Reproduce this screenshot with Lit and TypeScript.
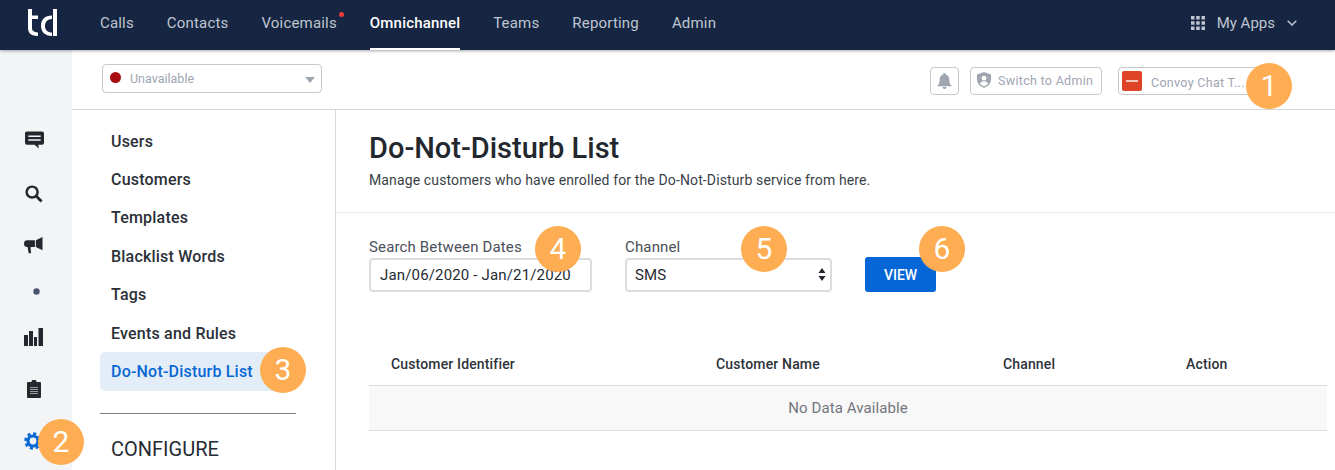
import { LitElement, html, css } from "lit";
import { customElement } from "lit/decorators.js";

@customElement("call-out")
class CallOut extends LitElement {
  static styles = css`
    :host { position: absolute; width: 46px; height: 46px; border-radius: 50%; background: #ffad52; color: #fff;
      display: flex; align-items: center; justify-content: center; font-size: 30px; line-height: 1; z-index: 5; }
  `;
  render() { return html`<slot></slot>`; }
}

@customElement("app-root")
class AppRoot extends LitElement {
  static styles = css`
    :host { display: block; width: 1335px; height: 470px; overflow: hidden; position: relative; background: #fff;
      font-family: Roboto, "Liberation Sans", sans-serif; color: #262b33; }
    .top { height: 50px; background: #162542; display: flex; align-items: stretch; box-shadow: 0 1px 3px rgba(0,0,0,.35); position: relative; z-index: 2; }
    .logo { width: 100px; flex: none; display: flex; }
    .logo svg { margin: 9px 0 0 28px; }
    .links { display: flex; gap: 33px; font-size: 15px; letter-spacing: .18px; }
    .links a { color: #bfc5d0; display: flex; align-items: center; position: relative; height: 50px; padding-bottom: 5px; box-sizing: border-box; }
    .links a.on { color: #fff; font-weight: 500; border-bottom: 2px solid #fff; padding-bottom: 3px; }
    .dot { position: absolute; top: 12px; right: -7px; width: 5px; height: 5px; border-radius: 50%; background: #ee3b3b; }
    .apps { margin-left: auto; margin-right: 38px; display: flex; align-items: center; color: #bfc5d0; font-size: 15px; padding-bottom: 5px; }
    .apps span { margin: 0 12px; }
    .body { display: flex; height: 420px; }
    .rail { width: 72px; flex: none; background: #f2f4f6; position: relative; }
    .rail svg { position: absolute; left: 24px; }
    .main { flex: 1; min-width: 0; }
    .sub { height: 59px; border-bottom: 1px solid #d4d6da; display: flex; align-items: center; padding: 0 77px 0 30px; position: relative; }
    .status { width: 218px; height: 27px; border: 1px solid #c6c8ce; border-radius: 4px; display: flex; align-items: center; color: #a0a5b2; font-size: 12.5px; position: relative; margin-top: -2px; }
    .status i { width: 11px; height: 11px; border-radius: 50%; background: #a80d10; margin: -2px 9px 0 7px; }
    .status b { position: absolute; right: 6px; top: 12px; width: 0; height: 0; border: 5px solid transparent; border-top: 6px solid #a0a5b2; border-bottom: 0; }
    .right { margin-left: auto; display: flex; align-items: center; margin-top: 3px; }
    .box { border: 1px solid #c6c8ce; border-radius: 4px; display: flex; align-items: center; color: #a0a5b2; font-size: 12.5px; box-sizing: border-box; height: 28px; letter-spacing: .3px; }
    .bell { width: 29px; justify-content: center; margin-right: 11px; }
    .admin { width: 132px; margin-right: 16px; padding: 0 0 2px 6px; gap: 7px; }
    .conv { width: 140px; padding-left: 3px; }
    .conv em { width: 20px; height: 20px; border-radius: 2px; background: #dd4526; display: flex; align-items: center; justify-content: center; margin-right: 9px; flex: none; }
    .conv em::before { content: ""; width: 12px; height: 2px; background: #f3c9bd; display: block; }
    .conv span { padding-top: 3px; }
    .cols { display: flex; height: 360px; }
    .menu { width: 264px; flex: none; box-sizing: border-box; border-right: 1px solid #d8d9dc; padding: 12px 39px 0 28px; font-size: 16px; font-weight: 500; letter-spacing: .2px; overflow: hidden; }
    .menu a { display: flex; align-items: center; height: 38.4px; padding-left: 11px; color: #2b3038; border-radius: 5px; }
    .menu a.on { background: #e3edf8; color: #0a68d4; height: 39px; }
    .menu hr { border: 0; border-top: 1px solid #7d7f83; margin: 22px 0 0 0; }
    .menu h4 { margin: 21px 0 0 11px; font-size: 20px; font-weight: 400; line-height: 28px; color: #262b33; letter-spacing: 0; }
    .content { flex: 1; min-width: 0; }
    .head { height: 103px; border-bottom: 1px solid #e8e9eb; padding: 20px 0 0 33px; box-sizing: border-box; }
    h1 { margin: 0; font-size: 29px; font-weight: 500; line-height: 36px; color: #23272e; }
    .head p { margin: 4px 0 0; font-size: 14px; line-height: 20px; color: #3a3f47; letter-spacing: .13px; }
    .filters { display: flex; padding: 25px 0 0 33px; align-items: flex-end; }
    .f label { display: block; font-size: 15px; line-height: 18px; color: #4a4f58; margin-bottom: 2px; letter-spacing: .15px; }
    .input { height: 34px; box-sizing: border-box; border: 2px solid #dcdcdc; border-radius: 4px; font-size: 15px; display: flex; align-items: center; color: #262b33; position: relative; letter-spacing: .16px; }
    .date { width: 223px; padding-left: 9px; margin-right: 33px; }
    .chan { width: 207px; padding-left: 8px; margin-right: 33px; }
    .chan svg { position: absolute; right: 4px; top: 8px; }
    .view { width: 71px; height: 35px; background: #0566d8; color: #fff; border-radius: 3px; font-size: 14px; font-weight: 500; display: flex; align-items: center; justify-content: center; }
    .table { margin: 52px 8px 0 33px; }
    .tr { display: grid; grid-template-columns: 325px 287px 183px 1fr; height: 42px; box-sizing: border-box; align-items: center; padding: 0 0 2px 22px; font-size: 14px; font-weight: 500; letter-spacing: .15px; color: #2e323a; border-bottom: 1px solid #d8d9dc; }
    .empty { height: 45px; box-sizing: border-box; background: #f8f8f8; border-bottom: 1px solid #dcdde0; display: flex; align-items: center; justify-content: center; font-size: 15px; letter-spacing: .1px; color: #72767e; }
  `;
  render() {
    return html`
      <div class="top">
        <div class="logo"><svg width="30" height="28" viewBox="0 0 30 28" fill="#fff">
          <path d="M0 0h4v6.500h6V10H4v9c0 2.500 1.500 4.200 6 4.500V27C3 27 0 24 0 19z"/>
          <path d="M25 0h4v27h-4zM24 6.500V10c-4.500 0-7 3-7 7s2.500 6.500 7 6.500V27c-7 0-11-4-11-10.200S17 6.500 24 6.500z"/>
        </svg></div>
        <div class="links">
          <a>Calls</a><a>Contacts</a><a>Voicemails<span class="dot"></span></a><a class="on">Omnichannel</a><a>Teams</a><a>Reporting</a><a>Admin</a>
        </div>
        <div class="apps">
          <svg width="14" height="14" viewBox="0 0 14 14" fill="#bfc5d0"><path d="M0 0h3.500v3.500H0zM5.200 0h3.500v3.500H5.200zM10.500 0H14v3.500h-3.500zM0 5.200h3.500v3.500H0zM5.200 5.200h3.500v3.500H5.200zM10.500 5.200H14v3.500h-3.500zM0 10.500h3.500V14H0zM5.200 10.500h3.500V14H5.200zM10.500 10.500H14V14h-3.500z"/></svg>
          <span>My Apps</span>
          <svg width="10" height="6" viewBox="0 0 10 6" fill="none" stroke="#bfc5d0" stroke-width="1.500"><path d="M.7.700 5 5l4.300-4.300"/></svg>
        </div>
      </div>
      <div class="body">
        <div class="rail">
          <svg style="top:81px;left:25px" width="19" height="18" viewBox="0 0 20 18"><path fill="#23272e" d="M2 0h16a2 2 0 0 1 2 2v10a2 2 0 0 1-2 2h-4l.5 4-4.500-4H2a2 2 0 0 1-2-2V2a2 2 0 0 1 2-2z"/><path stroke="#f2f4f6" stroke-width="1.500" d="M3.500 5h13M3.500 9h13"/></svg>
          <svg style="top:135px;left:25px" width="18" height="18" viewBox="0 0 19 19" fill="none" stroke="#23272e"><circle cx="7.500" cy="7.500" r="5.800" stroke-width="2.600"/><path d="m12 12 5.500 5.500" stroke-width="3"/></svg>
          <svg style="top:187px" width="19" height="18" viewBox="0 0 20 19" fill="#23272e"><path d="M19.500 0v14l-7-3.500V3.500zM0 7a3.500 3.500 0 0 1 3.500-3.500H11.500v7H8l-1.200.2L7.500 17l-2.500.5-1.300-7A3.500 3.500 0 0 1 0 7z"/></svg>
          <svg style="top:238px;left:33px" width="7" height="7" viewBox="0 0 7 7"><circle cx="3.500" cy="3.500" r="3.200" fill="#4a5470"/></svg>
          <svg style="top:278px" width="19" height="18" viewBox="0 0 19 18" fill="#23272e"><path d="M0 7h4v11H0zM5 3h4v15H5zM10 9h3v9h-3zM14.500 0H19v18h-4.500z" /></svg>
          <svg style="top:330px;left:27px" width="14" height="18" viewBox="0 0 14 18"><path fill="#23272e" d="M1 2h3.500a2.500 2.500 0 0 1 5 0H13a1 1 0 0 1 1 1v14a1 1 0 0 1-1 1H1a1 1 0 0 1-1-1V3a1 1 0 0 1 1-1z"/><path stroke="#9a9ca0" stroke-width="1" d="M3 7.500h8M3 9.500h8M3 11.500h8M3 13.500h8"/></svg>
          <svg style="top:382px" width="18" height="18" viewBox="0 0 18 18" fill="none" stroke="#0a68d4"><circle cx="9" cy="9" r="5" stroke-width="3.200"/><circle cx="9" cy="9" r="7.300" stroke-width="3" stroke-dasharray="3 2.730"/></svg>
        </div>
        <div class="main">
          <div class="sub">
            <div class="status"><i></i>Unavailable<b></b></div>
            <div class="right">
              <div class="box bell"><svg width="15" height="16" viewBox="0 0 15 16" fill="#a0a5b2"><path d="M7.500 0a1.300 1.300 0 0 1 1.300 1.400C11 2 12.300 3.800 12.300 6.200c0 3.500.7 4.800 2.200 6.300v.8H.5v-.8C2 11 2.700 9.700 2.700 6.200c0-2.400 1.300-4.200 3.500-4.800A1.300 1.300 0 0 1 7.500 0zM5.500 14h4a2 2 0 0 1-4 0z"/></svg></div>
              <div class="box admin"><svg width="14" height="16" viewBox="0 0 14 16"><path fill="#a0a5b2" d="M7 0l7 2.500v5c0 4-3 7-7 8.500-4-1.500-7-4.500-7-8.500v-5z"/><circle cx="7" cy="6.200" r="2.400" fill="#fff"/><path fill="#fff" d="M2.800 11.800c.6-1.800 2.200-2.600 4.200-2.600s3.600.8 4.200 2.600C10 13 8.500 14 7 14.500 5.500 14 4 13 2.800 11.800z"/></svg>Switch to Admin</div>
              <div class="box conv"><em></em><span>Convoy Chat T...</span></div>
            </div>
          </div>
          <div class="cols">
            <div class="menu">
              <a>Users</a><a>Customers</a><a>Templates</a><a>Blacklist Words</a><a>Tags</a><a>Events and Rules</a><a class="on">Do-Not-Disturb List</a>
              <hr />
              <h4>CONFIGURE</h4>
            </div>
            <div class="content">
              <div class="head">
                <h1>Do-Not-Disturb List</h1>
                <p>Manage customers who have enrolled for the Do-Not-Disturb service from here.</p>
              </div>
              <div class="filters">
                <div class="f"><label>Search Between Dates</label><div class="input date">Jan/06/2020 - Jan/21/2020</div></div>
                <div class="f"><label>Channel</label><div class="input chan">SMS<svg width="8" height="13" viewBox="0 0 8 13" fill="#23272e"><path d="M4 0l3.500 5H.5zM4 13 .5 8h7z"/></svg></div></div>
                <div class="view">VIEW</div>
              </div>
              <div class="table">
                <div class="tr"><span>Customer Identifier</span><span>Customer Name</span><span>Channel</span><span>Action</span></div>
                <div class="empty">No Data Available</div>
              </div>
            </div>
          </div>
        </div>
      </div>
      <call-out style="left:1246px;top:63px">1</call-out>
      <call-out style="left:38px;top:419px">2</call-out>
      <call-out style="left:260px;top:347px">3</call-out>
      <call-out style="left:535px;top:226px">4</call-out>
      <call-out style="left:741px;top:226px">5</call-out>
      <call-out style="left:919px;top:226px">6</call-out>
    `;
  }
}
